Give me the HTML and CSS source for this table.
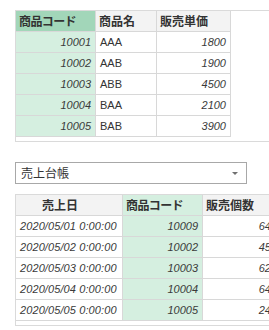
FILE: index.html
```html
<!DOCTYPE html>
<html lang="ja">
<head>
<meta charset="utf-8">
<link rel="stylesheet" href="styles.css">
</head>
<body>
<div class="panel panel-top">
  <div class="grid grid-top">
    <div class="cell head key-strong">商品コード</div>
    <div class="cell head">商品名</div>
    <div class="cell head">販売単価</div>

    <div class="cell key num">10001</div>
    <div class="cell txt">AAA</div>
    <div class="cell num">1800</div>

    <div class="cell key num">10002</div>
    <div class="cell txt">AAB</div>
    <div class="cell num">1900</div>

    <div class="cell key num">10003</div>
    <div class="cell txt">ABB</div>
    <div class="cell num">4500</div>

    <div class="cell key num">10004</div>
    <div class="cell txt">BAA</div>
    <div class="cell num">2100</div>

    <div class="cell key num">10005</div>
    <div class="cell txt">BAB</div>
    <div class="cell num">3900</div>
  </div>
</div>

<div class="select">
  <span class="select-label">売上台帳</span>
  <span class="select-arrow"></span>
</div>

<div class="panel panel-bottom">
  <div class="grid grid-bottom">
    <div class="cell head center">売上日</div>
    <div class="cell head key">商品コード</div>
    <div class="cell head">販売個数</div>

    <div class="cell num date">2020/05/01 0:00:00</div>
    <div class="cell key num">10009</div>
    <div class="cell num">64</div>

    <div class="cell num date">2020/05/02 0:00:00</div>
    <div class="cell key num">10002</div>
    <div class="cell num">45</div>

    <div class="cell num date">2020/05/03 0:00:00</div>
    <div class="cell key num">10003</div>
    <div class="cell num">62</div>

    <div class="cell num date">2020/05/04 0:00:00</div>
    <div class="cell key num">10004</div>
    <div class="cell num">64</div>

    <div class="cell num date">2020/05/05 0:00:00</div>
    <div class="cell key num">10005</div>
    <div class="cell num">24</div>
  </div>
</div>
</body>
</html>
```

FILE: styles.css
```css
html, body {
  margin: 0;
  padding: 0;
  overflow: hidden;
  background: #ffffff;
}

body {
  font-family: "Liberation Sans", "Noto Sans CJK JP", sans-serif;
  font-size: 11px;
  color: #333333;
  width: 269px;
  height: 330px;
}

.panel {
  box-sizing: border-box;
  margin-left: 15px;
  width: 254px;
  border: 1px solid #dadada;
  border-right: none;
  padding-bottom: 4px;
  overflow: hidden;
}

.panel-top {
  margin-top: 10px;
}

.grid {
  display: grid;
  grid-auto-rows: 21px;
}

.grid-top {
  grid-template-columns: 80px 61px 74px;
}

.grid-bottom {
  grid-template-columns: 107px 80px 73px;
}

.cell {
  box-sizing: border-box;
  height: 21px;
  line-height: 20px;
  padding: 0 4px;
  border-right: 1px solid #d8d8d8;
  border-bottom: 1px solid #d8d8d8;
  white-space: nowrap;
  overflow: hidden;
}

.head {
  background: #f3f3f3;
  font-family: "Noto Sans CJK JP", sans-serif;
  font-weight: bold;
  font-size: 12px;
  color: #333333;
  padding-left: 3px;
}

.head.key,
.head.key-strong {
  letter-spacing: -0.6px;
}

.key-strong {
  background: #a2d6b9;
}

.key,
.head.key {
  background: #d5efe0;
}

.center {
  text-align: left;
  padding-left: 26px;
}

.num {
  text-align: right;
  font-style: italic;
  color: #3a3a3a;
}

.date {
  text-align: left;
  padding-left: 4px;
  letter-spacing: 0.1px;
}

.txt {
  color: #333333;
}

.select {
  box-sizing: border-box;
  margin: 20px 0 10px 15px;
  width: 232px;
  height: 22px;
  border: 1px solid #a8a8a8;
  display: flex;
  align-items: center;
  justify-content: space-between;
  padding: 0 8px 0 5px;
}

.select-label {
  font-family: "Noto Sans CJK JP", sans-serif;
  font-size: 12px;
  color: #333333;
  line-height: 20px;
}

.select-arrow {
  width: 0;
  height: 0;
  border-left: 3px solid transparent;
  border-right: 3px solid transparent;
  border-top: 3px solid #707070;
  margin-top: 1px;
}
```
